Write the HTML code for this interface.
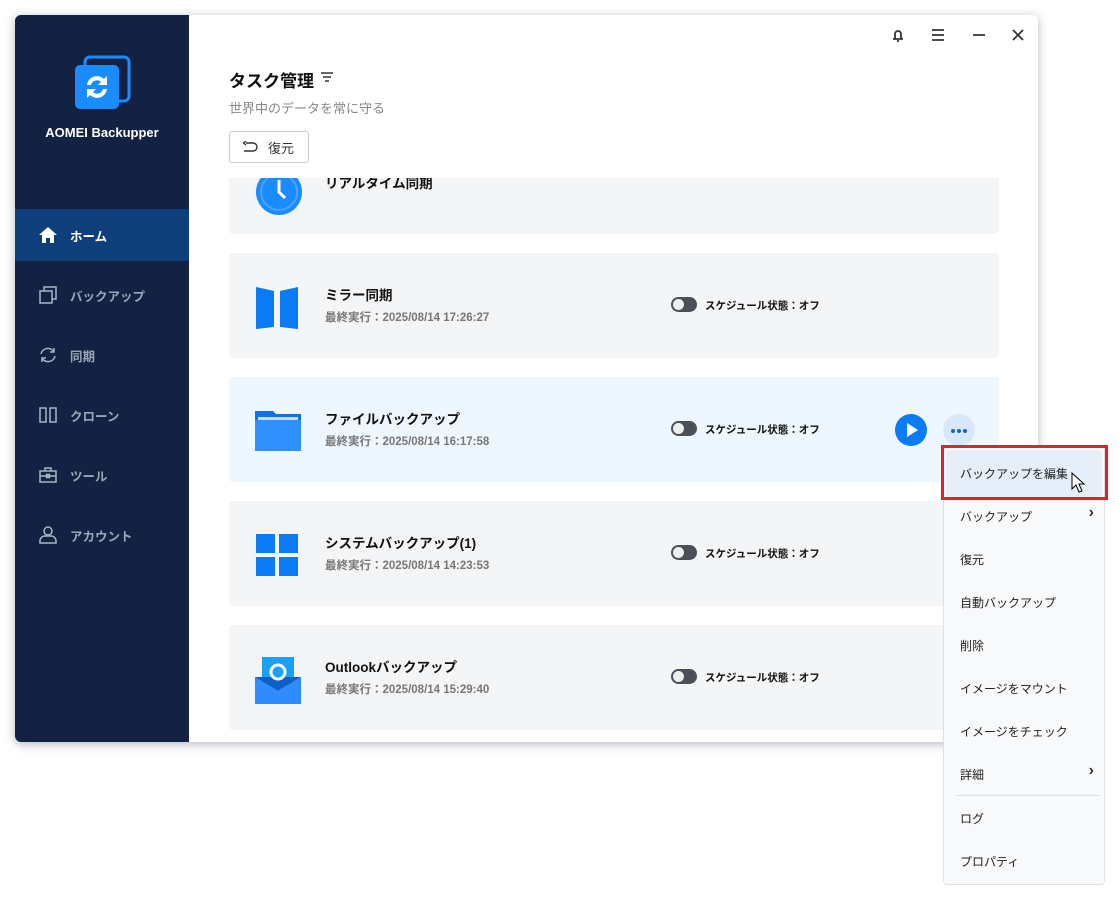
<!DOCTYPE html>
<html><head><meta charset="utf-8"><style>
*{margin:0;padding:0;box-sizing:border-box}
body{width:1119px;height:900px;background:#fff;position:relative;overflow:hidden;font-family:"Liberation Sans","Noto Sans CJK JP",sans-serif}
.win{position:absolute;left:15px;top:15px;width:1023px;height:727px;background:#fff;border-radius:6px;box-shadow:0 2px 10px rgba(40,50,80,.35);overflow:hidden}
.side{position:absolute;left:0;top:0;width:174px;height:727px;background:#132243}
.logo{position:absolute;left:58px;top:40px}
.brand{position:absolute;left:0;width:174px;top:110px;text-align:center;color:#fff;font-size:13px;font-weight:bold}
.nav{position:absolute;left:0;width:174px;height:52px;color:#9aa6b8;font-size:12.5px;font-weight:bold;display:flex;align-items:center;padding-left:23px}
.nav svg{margin-right:12px}
.nav.act{background:#0f3f7a;color:#fff}
.t{position:absolute;left:214px;top:52px;font-size:17px;font-weight:bold;color:#111}
.st{position:absolute;left:214px;top:83px;font-size:13px;color:#888}
.btn{position:absolute;left:214px;top:116px;width:80px;height:32px;border:1px solid #ccc;border-radius:3px;font-size:13px;color:#333;display:flex;align-items:center;padding-left:12px}
.clip{position:absolute;left:0;top:163px;width:1023px;height:564px;overflow:hidden}
.card{position:absolute;left:214px;width:770px;height:105px;background:#f4f5f7;border-radius:4px}
.card.hl{background:#eef6fe}
.ic{position:absolute;left:26px;top:32px}
.nm{position:absolute;left:96px;top:31px;font-size:13.5px;font-weight:bold;color:#111}
.dt{position:absolute;left:96px;top:56px;font-size:11.5px;font-weight:bold;color:#777}
.sw{position:absolute;left:442px;top:44px;width:26px;height:15px;border-radius:8px;background:#4b5058}
.sw:after{content:"";position:absolute;left:2px;top:2px;width:11px;height:11px;border-radius:50%;background:#eee}
.sl{position:absolute;left:476px;top:45px;font-size:10.5px;font-weight:bold;color:#111}
.menu{position:absolute;left:943px;top:445px;width:162px;height:440px;background:#f8f9fb;border:1px solid #dde0e5;border-radius:4px}
.mi{position:absolute;left:16px;font-size:12px;color:#222}
.ar{position:absolute;right:10px;font-size:16px;color:#333;font-weight:bold}
</style></head><body>
<div class="win">
 <div class="side">
  <svg class="logo" width="58" height="58" viewBox="0 0 58 58"><rect x="12" y="2" width="44" height="44" rx="5" fill="none" stroke="#1a8cff" stroke-width="3"/><rect x="2" y="10" width="44" height="44" rx="5" fill="#1a8cff"/><path d="M14 30a10 10 0 0 1 17-6l3-3v9h-9l3-3a6 6 0 0 0-10 3z M34 34a10 10 0 0 1-17 6l-3 3v-9h9l-3 3a6 6 0 0 0 10-3z" fill="#fff"/></svg>
  <div class="brand">AOMEI Backupper</div>
  <div class="nav act" style="top:194px"><svg width="20" height="18" viewBox="0 0 20 18"><path d="M10 1L1 9h3v8h4v-5h4v5h4V9h3z" fill="#fff"/></svg>ホーム</div>
  <div class="nav" style="top:254px"><svg width="20" height="18" viewBox="0 0 20 18" fill="none" stroke="#aab4c4" stroke-width="1.5"><rect x="2" y="5" width="12" height="12"/><path d="M6 5V1h12v12h-4"/></svg>バックアップ</div>
  <div class="nav" style="top:314px"><svg width="20" height="18" viewBox="0 0 20 18" fill="none" stroke="#aab4c4" stroke-width="1.5"><path d="M3 8a7 7 0 0 1 13-2M17 10a7 7 0 0 1-13 2"/><path d="M16 2v4h-4M4 16v-4h4"/></svg>同期</div>
  <div class="nav" style="top:374px"><svg width="20" height="18" viewBox="0 0 20 18" fill="none" stroke="#aab4c4" stroke-width="1.5"><rect x="2" y="2" width="6" height="14"/><rect x="12" y="2" width="6" height="14"/></svg>クローン</div>
  <div class="nav" style="top:434px"><svg width="20" height="18" viewBox="0 0 20 18" fill="none" stroke="#aab4c4" stroke-width="1.5"><rect x="2" y="5" width="16" height="11"/><path d="M7 5V2h6v3M2 10h16"/><rect x="8.5" y="8.5" width="3" height="3"/></svg>ツール</div>
  <div class="nav" style="top:494px"><svg width="20" height="18" viewBox="0 0 20 18" fill="none" stroke="#aab4c4" stroke-width="1.5"><circle cx="10" cy="5" r="4"/><path d="M2 17v-2a5 5 0 0 1 5-5h6a5 5 0 0 1 5 5v2z"/></svg>アカウント</div>
 </div>
 <svg style="position:absolute;left:876px;top:12px" width="140" height="16" viewBox="0 0 140 16" fill="none" stroke="#333" stroke-width="1.8"><path d="M2 12h10M4 12V7a3 3 0 0 1 6 0v5M6 14h2"/><path d="M41 3h12M41 8h12M41 13h12"/><path d="M82 8h12"/><path d="M122 3l10 10M132 3l-10 10"/></svg>
 <div class="t">タスク管理</div>
 <svg style="position:absolute;left:306px;top:57px" width="12" height="10" viewBox="0 0 12 10" stroke="#333" stroke-width="1.4"><path d="M0 1h12M2 5h8M4 9h4"/></svg>
 <div class="st">世界中のデータを常に守る</div>
 <div class="btn"><svg width="16" height="12" viewBox="0 0 16 12" fill="none" stroke="#333" stroke-width="1.4" style="margin-right:10px"><path d="M4 2h7a4 4 0 0 1 0 8H2M4 0L1.5 2 4 4"/></svg>復元</div>
 <div class="clip">
  <div class="card" style="top:-40px;height:96px"><svg class="ic" style="top:30px" width="48" height="48"><circle cx="24" cy="24" r="23" fill="#1a8cff"/><circle cx="24" cy="24" r="18" fill="none" stroke="#4aa3ff" stroke-width="2"/><path d="M24 12v12l6 6" stroke="#fff" stroke-width="3" fill="none"/></svg><div class="nm" style="top:34px">リアルタイム同期</div></div>
  <div class="card" style="top:75px"><svg class="ic" width="44" height="44" viewBox="0 0 44 44"><path d="M1 2l18 4v36l-18 2z M25 6l18-4v42l-18-2z" fill="#0a7af5"/></svg><div class="nm">ミラー同期</div><div class="dt">最終実行：2025/08/14 17:26:27</div><div class="sw"></div><div class="sl">スケジュール状態：オフ</div></div>
  <div class="card hl" style="top:199px"><svg class="ic" width="46" height="44" viewBox="0 0 46 44"><path d="M0 2h18l3 3h25v37H0z" fill="#0d72e8"/><rect x="3" y="8" width="40" height="4" fill="#bfe0ff"/><rect x="0" y="11" width="46" height="31" fill="#2f90ff"/></svg><div class="nm">ファイルバックアップ</div><div class="dt">最終実行：2025/08/14 16:17:58</div><div class="sw"></div><div class="sl">スケジュール状態：オフ</div>
   <svg style="position:absolute;left:666px;top:37px" width="32" height="32"><circle cx="16" cy="16" r="16" fill="#0a7cf7"/><path d="M12 9l11 7-11 7z" fill="#fff"/></svg>
   <svg style="position:absolute;left:714px;top:37px" width="32" height="32"><circle cx="16" cy="16" r="16" fill="#d6e8f9"/><circle cx="10" cy="17" r="2" fill="#1366c9"/><circle cx="16" cy="17" r="2" fill="#1366c9"/><circle cx="22" cy="17" r="2" fill="#1366c9"/></svg></div>
  <div class="card" style="top:323px"><svg class="ic" width="44" height="44" viewBox="0 0 44 44" fill="#0a7af5"><rect x="1" y="1" width="19" height="19"/><rect x="24" y="1" width="19" height="19"/><rect x="1" y="24" width="19" height="19"/><rect x="24" y="24" width="19" height="19"/></svg><div class="nm">システムバックアップ(1)</div><div class="dt">最終実行：2025/08/14 14:23:53</div><div class="sw"></div><div class="sl">スケジュール状態：オフ</div></div>
  <div class="card" style="top:447px"><svg class="ic" width="46" height="48" viewBox="0 0 46 48"><rect x="7" y="0" width="32" height="28" fill="#1aa0f5"/><path d="M0 20l23 14 23-14v27H0z" fill="#2f8cff"/><path d="M0 20l23 14 23-14" fill="#0f5fc8"/><circle cx="23" cy="15" r="7" fill="none" stroke="#fff" stroke-width="3"/></svg><div class="nm">Outlookバックアップ</div><div class="dt">最終実行：2025/08/14 15:29:40</div><div class="sw"></div><div class="sl">スケジュール状態：オフ</div></div>
 </div>
</div>
<div class="menu">
 <div style="position:absolute;left:2px;top:4px;width:156px;height:48px;background:#e5eef9;border-radius:3px"></div>
 <div class="mi" style="top:19px">バックアップを編集</div>
 <svg style="position:absolute;left:127px;top:26px" width="14" height="22" viewBox="0 0 14 22"><path d="M1 1v16l4-4 3 7 3-1-3-7h5z" fill="#fff" stroke="#000"/></svg>
 <div class="mi" style="top:62px">バックアップ</div><div class="ar" style="top:58px">›</div>
 <div class="mi" style="top:105px">復元</div>
 <div class="mi" style="top:148px">自動バックアップ</div>
 <div class="mi" style="top:191px">削除</div>
 <div class="mi" style="top:234px">イメージをマウント</div>
 <div class="mi" style="top:277px">イメージをチェック</div>
 <div class="mi" style="top:320px">詳細</div><div class="ar" style="top:316px">›</div>
 <div style="position:absolute;left:12px;right:4px;top:349px;height:1px;background:#dde0e5"></div>
 <div class="mi" style="top:364px">ログ</div>
 <div class="mi" style="top:407px">プロパティ</div>
</div>
<div style="position:absolute;left:941px;top:445px;width:167px;height:55px;border:3px solid #e5202a"></div>
</body></html>
